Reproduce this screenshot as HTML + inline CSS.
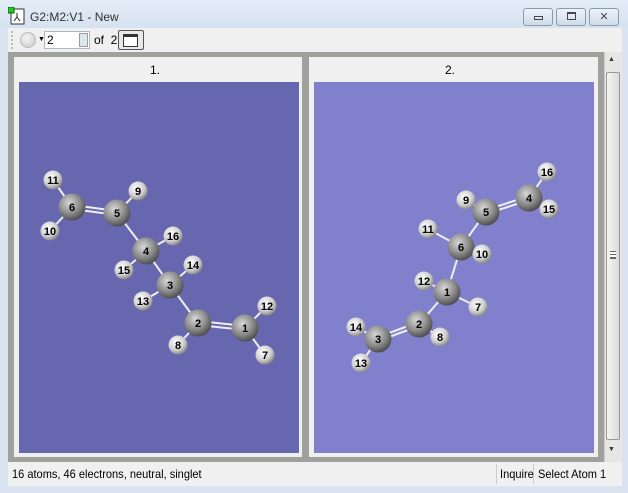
<!DOCTYPE html>
<html><head><meta charset="utf-8"><style>
*{margin:0;padding:0;box-sizing:border-box}
body{width:628px;height:493px;overflow:hidden;background:#d9e4f0;font-family:"Liberation Sans",sans-serif;position:relative}
.abs{position:absolute}
.title{left:0;top:0;width:628px;height:28px;background:linear-gradient(#e4edf7,#d6e2ef)}
.tb{left:8px;top:28px;width:614px;height:24px;background:#f0f0f0}
.btn{top:8px;height:18px;border:1px solid #8a9bb0;border-radius:3px;background:linear-gradient(#eef3f9,#cfdbe8)}
</style></head><body>
<div class="abs title"></div>
<svg class="abs" style="left:8px;top:7px" width="18" height="18"><rect x="3" y="2" width="13" height="15" fill="#fff" stroke="#333"/><rect x="0" y="0" width="6" height="6" fill="#2c2" stroke="#060"/><path d="M9 6 L9 10 L6 14 M9 10 L12 14" stroke="#222" fill="none"/></svg>
<div class="abs" style="left:30px;top:10px;font-size:12px;color:#333">G2:M2:V1 - New</div>
<div class="abs btn" style="left:523px;width:30px"><div class="abs" style="left:10px;top:7px;width:9px;height:4px;border:1px solid #445"></div></div>
<div class="abs btn" style="left:556px;width:30px"><div class="abs" style="left:10px;top:3px;width:9px;height:8px;border:1px solid #445;border-top:2px solid #445"></div></div>
<div class="abs btn" style="left:589px;width:30px;text-align:center;font-size:11px;line-height:16px;color:#445">✕</div>
<div class="abs tb"></div>
<div class="abs" style="left:11px;top:31px;width:2px;height:18px;border-left:2px dotted #bbb"></div>
<div class="abs" style="left:20px;top:32px;width:16px;height:16px;border-radius:50%;background:radial-gradient(circle at 40% 35%,#f4f4f4,#c8c8c8);border:1px solid #bbb"></div>
<div class="abs" style="left:38px;top:36px;font-size:7px">▼</div>
<div class="abs" style="left:44px;top:31px;width:46px;height:18px;background:#fff;border:1px solid #abb;font-size:12px;padding-left:2px;line-height:16px">2</div>
<div class="abs" style="left:79px;top:33px;width:9px;height:14px;background:#dde6f0;border:1px solid #99a"></div>
<div class="abs" style="left:94px;top:33px;font-size:12px">of&nbsp; 2</div>
<div class="abs" style="left:118px;top:30px;width:26px;height:20px;border:1px solid #555;border-radius:2px;background:#e8e8e8"><div class="abs" style="left:4px;top:3px;width:15px;height:13px;background:#fff;border:1px solid #333;border-top:3px solid #333"></div></div>
<div class="abs" style="left:8px;top:52px;width:596px;height:410px;background:#a0a09c"></div>
<div class="abs" style="left:14px;top:57px;width:288px;height:400px;background:#f0f0f0"></div>
<div class="abs" style="left:309px;top:57px;width:289px;height:400px;background:#f0f0f0"></div>
<div class="abs" style="left:150px;top:63px;font-size:12px">1.</div>
<div class="abs" style="left:445px;top:63px;font-size:12px">2.</div>
<div class="abs" style="left:604px;top:52px;width:18px;height:410px;background:#e6e6e6;border-left:1px solid #ccc"></div>
<div class="abs" style="left:606px;top:72px;width:14px;height:368px;background:linear-gradient(90deg,#f4f4f4,#dcdcdc);border:1px solid #999;border-radius:2px"></div>
<div class="abs" style="left:608px;top:56px;font-size:7px;color:#333">▲</div>
<div class="abs" style="left:608px;top:446px;font-size:7px;color:#333">▼</div>
<div class="abs" style="left:610px;top:251px;width:6px;height:8px;border-top:1px solid #666;border-bottom:1px solid #666;background:linear-gradient(#fff 0 2px,#666 2px 3px,#fff 3px 5px,#666 5px 6px,#fff 6px)"></div>
<div class="abs" style="left:8px;top:462px;width:614px;height:24px;background:#f0f0f0"></div>
<div class="abs" style="left:12px;top:467px;font-size:12px;transform:scaleX(.92);transform-origin:left">16 atoms, 46 electrons, neutral, singlet</div>
<div class="abs" style="left:496px;top:464px;width:1px;height:20px;background:#ccc"></div>
<div class="abs" style="left:533px;top:464px;width:1px;height:20px;background:#ccc"></div>
<div class="abs" style="left:500px;top:467px;font-size:12px;transform:scaleX(.92);transform-origin:left">Inquire</div>
<div class="abs" style="left:538px;top:467px;font-size:12px;transform:scaleX(.92);transform-origin:left">Select Atom 1</div>
<svg class="abs" style="left:0;top:0" width="628" height="493" font-family="Liberation Sans,sans-serif" font-size="11" font-weight="bold" text-anchor="middle">
<defs>
<radialGradient id="c" cx="0.4" cy="0.35" r="0.7"><stop offset="0" stop-color="#d8d8d8"/><stop offset="0.6" stop-color="#868686"/><stop offset="1" stop-color="#444"/></radialGradient>
<radialGradient id="h" cx="0.4" cy="0.35" r="0.7"><stop offset="0" stop-color="#fff"/><stop offset="0.6" stop-color="#cfcfcf"/><stop offset="1" stop-color="#7a7a7a"/></radialGradient>
</defs>
<rect x="19" y="82" width="280" height="371" fill="#6767b0"/>
<rect x="314" y="82" width="280" height="371" fill="#8080cc"/>
<g stroke="#eee" stroke-width="2">
<line x1="72" y1="205" x2="117" y2="211"/><line x1="72" y1="209" x2="117" y2="215"/>
<line x1="117" y1="213" x2="146" y2="251"/><line x1="146" y1="251" x2="170" y2="285"/><line x1="170" y1="285" x2="198" y2="323"/>
<line x1="198" y1="321" x2="245" y2="326"/><line x1="198" y1="325" x2="245" y2="330"/>
<line x1="72" y1="207" x2="53" y2="180"/><line x1="72" y1="207" x2="50" y2="231"/><line x1="117" y1="213" x2="138" y2="191"/>
<line x1="146" y1="251" x2="173" y2="236"/><line x1="146" y1="251" x2="124" y2="270"/><line x1="170" y1="285" x2="193" y2="265"/>
<line x1="170" y1="285" x2="143" y2="301"/><line x1="245" y1="328" x2="267" y2="306"/><line x1="245" y1="328" x2="265" y2="355"/><line x1="198" y1="323" x2="178" y2="345"/>
<line x1="529" y1="196" x2="486" y2="210"/><line x1="529" y1="200" x2="486" y2="214"/>
<line x1="486" y1="212" x2="461" y2="247"/><line x1="461" y1="247" x2="447" y2="292"/><line x1="447" y1="292" x2="419" y2="324"/>
<line x1="419" y1="322" x2="378" y2="337"/><line x1="419" y1="326" x2="378" y2="341"/>
<line x1="529" y1="198" x2="547" y2="172"/><line x1="529" y1="198" x2="549" y2="209"/><line x1="486" y1="212" x2="466" y2="200"/>
<line x1="461" y1="247" x2="428" y2="229"/><line x1="461" y1="247" x2="482" y2="254"/><line x1="447" y1="292" x2="424" y2="281"/>
<line x1="447" y1="292" x2="478" y2="307"/><line x1="419" y1="324" x2="440" y2="337"/><line x1="378" y1="339" x2="356" y2="327"/><line x1="378" y1="339" x2="361" y2="363"/>
</g>
<g fill="url(#h)">
<circle cx="53" cy="180" r="9.5"/><circle cx="50" cy="231" r="9.5"/><circle cx="138" cy="191" r="9.5"/><circle cx="124" cy="270" r="9.5"/><circle cx="143" cy="301" r="9.5"/><circle cx="178" cy="345" r="9.5"/><circle cx="267" cy="306" r="9.5"/><circle cx="265" cy="355" r="9.5"/>
<circle cx="466" cy="200" r="9.5"/><circle cx="428" cy="229" r="9.5"/><circle cx="424" cy="281" r="9.5"/><circle cx="356" cy="327" r="9.5"/><circle cx="361" cy="363" r="9.5"/><circle cx="547" cy="172" r="9.5"/>
</g>
<g fill="url(#c)">
<circle cx="72" cy="207" r="13.5"/><circle cx="117" cy="213" r="13.5"/><circle cx="146" cy="251" r="13.5"/><circle cx="170" cy="285" r="13.5"/><circle cx="198" cy="323" r="13.5"/><circle cx="245" cy="328" r="13.5"/>
<circle cx="529" cy="198" r="13.5"/><circle cx="486" cy="212" r="13.5"/><circle cx="461" cy="247" r="13.5"/><circle cx="447" cy="292" r="13.5"/><circle cx="419" cy="324" r="13.5"/><circle cx="378" cy="339" r="13.5"/>
</g>
<g fill="url(#h)">
<circle cx="173" cy="236" r="9.5"/><circle cx="193" cy="265" r="9.5"/><circle cx="549" cy="209" r="9.5"/><circle cx="482" cy="254" r="9.5"/><circle cx="478" cy="307" r="9.5"/><circle cx="440" cy="337" r="9.5"/>
</g>
<g fill="#000">
<text x="72" y="211">6</text><text x="117" y="217">5</text><text x="146" y="255">4</text><text x="170" y="289">3</text><text x="198" y="327">2</text><text x="245" y="332">1</text>
<text x="53" y="184">11</text><text x="50" y="235">10</text><text x="138" y="195">9</text><text x="173" y="240">16</text><text x="124" y="274">15</text><text x="193" y="269">14</text><text x="143" y="305">13</text><text x="267" y="310">12</text><text x="178" y="349">8</text><text x="265" y="359">7</text>
<text x="529" y="202">4</text><text x="486" y="216">5</text><text x="461" y="251">6</text><text x="447" y="296">1</text><text x="419" y="328">2</text><text x="378" y="343">3</text>
<text x="547" y="176">16</text><text x="549" y="213">15</text><text x="466" y="204">9</text><text x="428" y="233">11</text><text x="482" y="258">10</text><text x="424" y="285">12</text><text x="478" y="311">7</text><text x="440" y="341">8</text><text x="356" y="331">14</text><text x="361" y="367">13</text>
</g>
</svg>
</body></html>
